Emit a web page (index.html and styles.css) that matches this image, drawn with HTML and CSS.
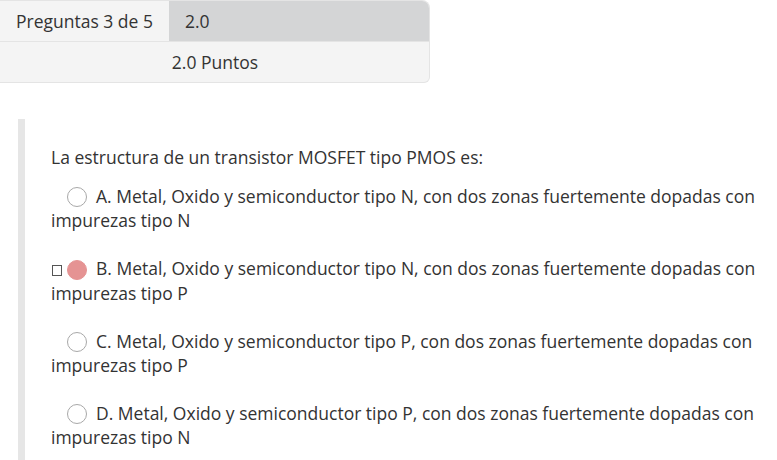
FILE: index.html
```html
<!DOCTYPE html>
<html lang="es">
<head>
<meta charset="utf-8">
<title>Pregunta</title>
<link rel="stylesheet" href="styles.css">
</head>
<body>
<div class="summary">
  <div class="cell label">Preguntas 3 de 5</div>
  <div class="cell value">2.0</div>
  <div class="cell points">2.0 Puntos</div>
</div>

<div class="question">
  <p class="stem">La estructura de un transistor MOSFET tipo PMOS es:</p>
  <div class="option"><span class="mark"></span><span class="radio"></span>A. Metal, Oxido y semiconductor tipo N, con dos zonas fuertemente dopadas con impurezas tipo N</div>
  <div class="option"><span class="mark"><span class="box"></span></span><span class="radio selected"></span>B. Metal, Oxido y semiconductor tipo N, con dos zonas fuertemente dopadas con impurezas tipo P</div>
  <div class="option"><span class="mark"></span><span class="radio"></span>C. Metal, Oxido y semiconductor tipo P, con dos zonas fuertemente dopadas con impurezas tipo P</div>
  <div class="option"><span class="mark"></span><span class="radio"></span>D. Metal, Oxido y semiconductor tipo P, con dos zonas fuertemente dopadas con impurezas tipo N</div>
</div>
</body>
</html>
```
FILE: styles.css
```css
html, body {
  margin: 0;
  padding: 0;
  background: #ffffff;
}
body {
  font-family: "Open Sans", "Liberation Sans", sans-serif;
  font-size: 17.5px;
  color: #333333;
  line-height: 24px;
  overflow: hidden;
}
.summary {
  width: 430px;
  box-sizing: border-box;
  display: grid;
  grid-template-columns: 169px 1fr;
  border: 1px solid #e4e4e4;
  border-left: none;
  border-radius: 0 8px 6px 0;
  overflow: hidden;
  background: #f4f4f4;
}
.cell {
  height: 40px;
  display: flex;
  align-items: center;
  padding: 0 16px;
}
.label {
  background: #f4f4f4;
}
.value {
  background: #d4d5d6;
}
.points {
  grid-column: 1 / 3;
  justify-content: center;
  border-top: 1px solid #e4e4e4;
  padding-right: 0;
  padding-left: 1px;
}
.question {
  margin: 36px 0 0 18px;
  border-left: 7px solid #e6e6e6;
  padding: 26px 10px 16px 26px;
}
.stem {
  margin: 0 0 15px 0;
}
.option {
  margin-bottom: 24px;
}
.option:last-child {
  margin-bottom: 0;
}
.mark {
  display: inline-block;
  width: 16px;
  height: 20px;
  vertical-align: middle;
  position: relative;
  top: -1px;
}
.box {
  display: block;
  width: 8px;
  height: 9px;
  border: 1px solid #555555;
  margin: 5px 0 0 1px;
}
.radio {
  display: inline-block;
  width: 20px;
  height: 20px;
  box-sizing: border-box;
  border: 1px solid #a8a8a8;
  border-radius: 50%;
  background: #ffffff;
  vertical-align: middle;
  margin-right: 9px;
  position: relative;
  top: -1px;
}
.radio.selected {
  background: #e59393;
  border-color: #e59393;
}
```
